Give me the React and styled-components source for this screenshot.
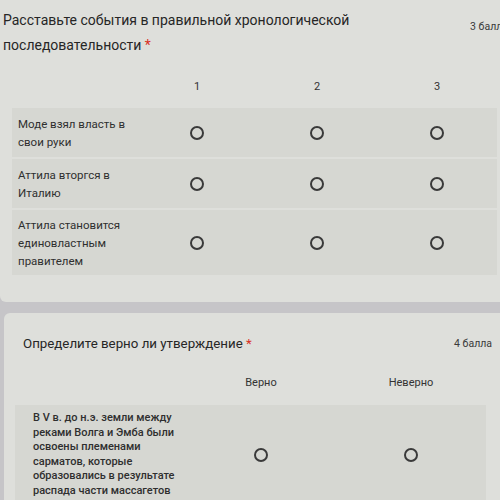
import React from "react";
import styled, { createGlobalStyle } from "styled-components";

const Global = createGlobalStyle`
  html, body { margin: 0; padding: 0; }
  body {
    background: #c6c5c8;
    font-family: Roboto, "Noto Sans", "Liberation Sans", sans-serif;
    color: #2b2b2b;
  }
`;

const Page = styled.div`
  width: 500px;
  height: 500px;
  overflow: hidden;
  display: flex;
  flex-direction: column;
  gap: 11px;
  background: #c6c5c8;
`;

const Card = styled.section`
  background: #dedfdb;
  margin-left: ${(p) => p.$left}px;
  width: ${(p) => 520 - p.$left}px;
  padding: ${(p) => p.$pad};
  border-radius: ${(p) => (p.$top ? "0 0 6px 6px" : "6px 6px 0 0")};
  box-sizing: border-box;
  flex-shrink: 0;
`;

const Head = styled.div`
  display: flex;
  justify-content: space-between;
  align-items: flex-start;
`;

const Title = styled.h2`
  margin: 0;
  font-weight: 400;
  font-size: ${(p) => p.$size}px;
  line-height: ${(p) => p.$lh}px;
  color: #262626;
  width: ${(p) => p.$w}px;
`;

const Star = styled.span`
  color: #d93025;
`;

const Points = styled.span`
  font-size: 10.5px;
  color: #3a3a3a;
  white-space: nowrap;
  margin-top: ${(p) => p.$mt}px;
  margin-right: ${(p) => p.$mr}px;
`;

const Grid = styled.div`
  display: grid;
  grid-template-columns: ${(p) => p.$cols};
  margin-left: ${(p) => p.$ml}px;
  margin-top: ${(p) => p.$mt}px;
  row-gap: 2px;
`;

const ColHead = styled.div`
  text-align: center;
  font-size: ${(p) => p.$size}px;
  color: #333;
  padding-bottom: ${(p) => p.$pb}px;
`;

const Row = styled.div`
  display: contents;
`;

const Label = styled.div`
  background: #d6d7d2;
  font-size: ${(p) => p.$size}px;
  line-height: ${(p) => p.$lh}px;
  color: #2f2f2f;
  font-weight: ${(p) => p.$weight || 400};
  padding: ${(p) => p.$pad};
  display: flex;
  align-items: center;
  min-height: ${(p) => p.$h}px;
  box-sizing: border-box;
`;

const Cell = styled.div`
  background: #d6d7d2;
  display: flex;
  align-items: center;
  justify-content: center;
`;

const Radio = styled.span`
  width: 14px;
  height: 14px;
  border: 2px solid #3a3a3a;
  border-radius: 50%;
  box-sizing: border-box;
`;

const Spacer = styled.div`
  height: ${(p) => p.$h}px;
`;

const order = [
  { label: ["Моде взял власть в", "свои руки"], h: 49 },
  { label: ["Аттила вторгся в", "Италию"], h: 49 },
  { label: ["Аттила становится", "единовластным", "правителем"], h: 65 },
];

function Lines({ lines }) {
  return (
    <div>
      {lines.map((l, i) => (
        <div key={i}>{l}</div>
      ))}
    </div>
  );
}

export default function App() {
  return (
    <>
      <Global />
      <Page>
        <Card $left={0} $pad="8px 0 27px 3px" $top>
          <Head>
            <Title $size={14} $lh={25} $w={390}>
              Расставьте события в правильной хронологической последовательности <Star>*</Star>
            </Title>
            <Points $mt={12} $mr={12}>3 балла</Points>
          </Head>
          <Grid $cols="125px 120px 120px 120px" $ml={9} $mt={22}>
            <div />
            <ColHead $size={11} $pb={13}>1</ColHead>
            <ColHead $size={11} $pb={13}>2</ColHead>
            <ColHead $size={11} $pb={13}>3</ColHead>
            {order.map((r, i) => (
              <Row key={i}>
                <Label $size={11.5} $lh={18} $pad="2px 0 2px 6px" $h={r.h}>
                  <Lines lines={r.label} />
                </Label>
                <Cell><Radio /></Cell>
                <Cell><Radio /></Cell>
                <Cell><Radio /></Cell>
              </Row>
            ))}
          </Grid>
        </Card>
        <Card $left={4} $pad="22px 0 0 19px">
          <Head>
            <Title $size={13.3} $lh={18} $w={320}>
              Определите верно ли утверждение <Star>*</Star>
            </Title>
            <Points $mt={2} $mr={28}>4 балла</Points>
          </Head>
          <Grid $cols="171px 150px 150px" $ml={-8} $mt={23}>
            <div />
            <ColHead $size={11} $pb={14}>Верно</ColHead>
            <ColHead $size={11} $pb={14}>Неверно</ColHead>
            <Label $size={11} $lh={14.6} $weight={500} $pad="6px 0 6px 18px" $h={0}>
              <Lines
                lines={[
                  "В V в. до н.э. земли между",
                  "реками Волга и Эмба были",
                  "освоены племенами",
                  "сарматов, которые",
                  "образовались в результате",
                  "распада части массагетов",
                ]}
              />
            </Label>
            <Cell><Radio /></Cell>
            <Cell><Radio /></Cell>
          </Grid>
          <Spacer $h={20} />
        </Card>
      </Page>
    </>
  );
}
